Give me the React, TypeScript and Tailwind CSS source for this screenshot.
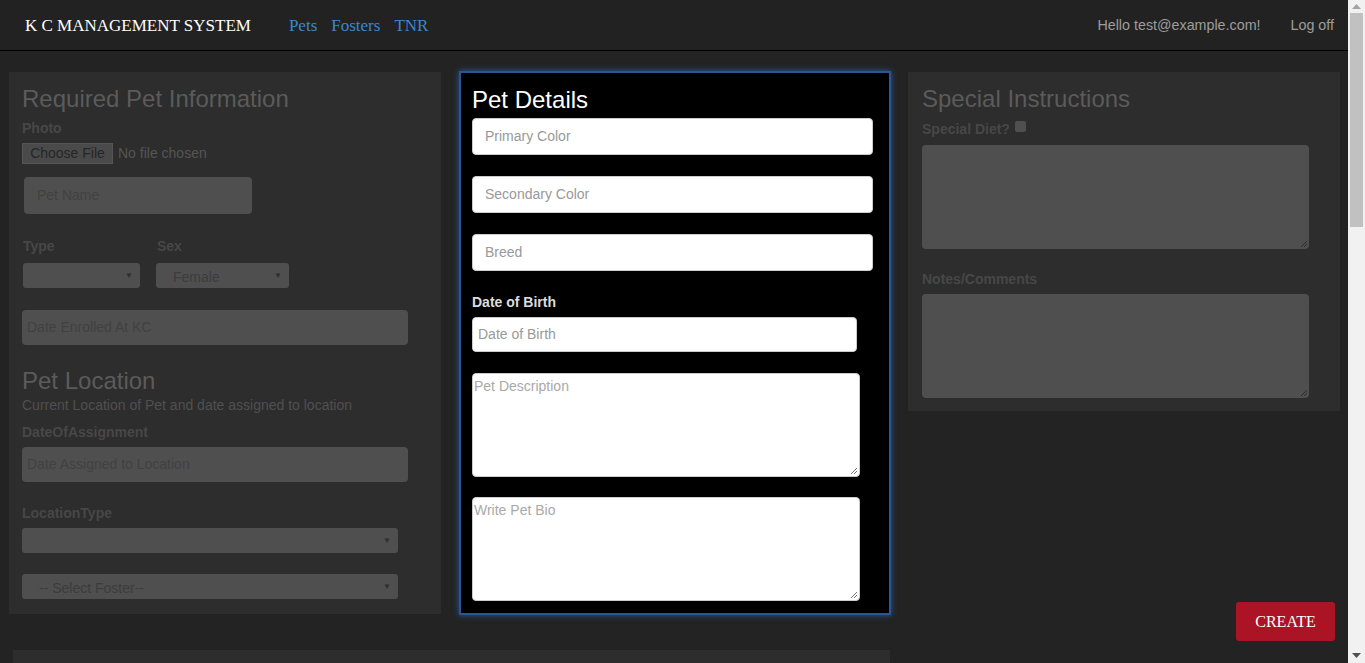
// ============================================
// PAGE: Create Pet — K C Management System
// ============================================

const sans = "font-['Liberation_Sans',Arial,sans-serif]";
const serif = "font-['Liberation_Serif','Times_New_Roman',serif]";

function Caret() {
    return <span className="text-[8px] leading-none text-[#2e2e2e]">▼</span>;
}

function Navbar() {
    return (
        <div className="h-[51px] flex-shrink-0 flex items-center bg-[#222222] border-b border-black pl-[25px] pr-[14px] pt-[2px]">
            <span className={`${serif} text-[17px] text-white`}>K C MANAGEMENT SYSTEM</span>
            <nav className={`${serif} flex items-center gap-[14px] ml-[38px] text-[17px] text-[#3d87cf]`}>
                <span>Pets</span>
                <span>Fosters</span>
                <span>TNR</span>
            </nav>
            <div className={`${sans} ml-auto flex items-center gap-[30px] text-[14.3px] text-[#9d9d9d]`}>
                <span>Hello test@example.com!</span>
                <span>Log off</span>
            </div>
        </div>
    );
}

function RequiredInfo() {
    return (
        <div className={`${sans} w-[432px] h-[542px] flex-shrink-0 bg-[#2d2d2d] px-[13px] pt-[14px] flex flex-col items-start`}>
            <h2 className="text-[24px] leading-[26px] text-[#5b5b5b]">Required Pet Information</h2>

            {/* Photo */}
            <label className="mt-[6px] text-[14px] leading-[20px] font-bold text-[#474747]">Photo</label>
            <div className="mt-[5px] flex items-center">
                <div className="h-[21px] w-[91px] flex items-center justify-center bg-[#4a4a4a] border border-[#555] text-[14px] text-[#262626]">Choose File</div>
                <span className="ml-[5px] text-[14px] text-[#555]">No file chosen</span>
            </div>

            {/* Pet name */}
            <div className="ml-[2px] mt-[13px] h-[37px] w-[228px] rounded-[4px] bg-[#4f4f4f] flex items-center px-[13px] text-[14px] text-[#414141]">Pet Name</div>

            {/* Type + Sex */}
            <div className="mt-[22px] flex gap-[16px]">
                <div className="flex flex-col">
                    <label className="ml-[1px] text-[14px] leading-[20px] font-bold text-[#474747]">Type</label>
                    <div className="mt-[7px] ml-[1px] h-[25px] w-[117px] rounded-[3px] bg-[#4f4f4f] flex items-center justify-end pr-[7px]"><Caret /></div>
                </div>
                <div className="flex flex-col">
                    <label className="ml-[1px] text-[14px] leading-[20px] font-bold text-[#474747]">Sex</label>
                    <div className="mt-[7px] h-[25px] w-[133px] rounded-[3px] bg-[#4f4f4f] flex items-center justify-between pl-[17px] pr-[7px] text-[14px] text-[#3c3c3c]">
                        <span className="pt-[4px]">Female</span>
                        <Caret />
                    </div>
                </div>
            </div>

            <div className="mt-[22px] h-[35px] w-[386px] rounded-[4px] bg-[#4f4f4f] flex items-center px-[5px] text-[14px] text-[#414141]">Date Enrolled At KC</div>

            {/* Location */}
            <h2 className="mt-[23px] text-[24px] leading-[26px] text-[#5b5b5b]">Pet Location</h2>
            <p className="mt-[1px] text-[14px] leading-[20px] text-[#505050]">Current Location of Pet and date assigned to location</p>
            <label className="mt-[7px] text-[14px] leading-[20px] font-bold text-[#474747]">DateOfAssignment</label>
            <div className="mt-[5px] h-[35px] w-[386px] rounded-[4px] bg-[#4f4f4f] flex items-center px-[5px] text-[14px] text-[#414141]">Date Assigned to Location</div>
            <label className="mt-[21px] text-[14px] leading-[20px] font-bold text-[#474747]">LocationType</label>
            <div className="mt-[5px] h-[25px] w-[376px] rounded-[3px] bg-[#4f4f4f] flex items-center justify-end pr-[7px]"><Caret /></div>
            <div className="mt-[21px] h-[25px] w-[376px] rounded-[3px] bg-[#4f4f4f] flex items-center justify-between pl-[17px] pr-[7px] text-[14px] text-[#3c3c3c]">
                <span className="pt-[4px]">-- Select Foster--</span>
                <Caret />
            </div>
        </div>
    );
}

function PetDetails() {
    const inputCls = "h-[37px] w-[401px] rounded-[4px] bg-white border border-[#ccc] flex items-center px-[12px] text-[14px] text-[#999]";
    return (
        <div className={`${sans} -mt-[1px] w-[432px] h-[544px] flex-shrink-0 bg-black border-2 border-[#2b5694] shadow-[0_0_6px_#2a5a9a] pl-[11px] pt-[14px] flex flex-col items-start`}>
            <h2 className="text-[24px] leading-[26px] text-white">Pet Details</h2>
            <div className={`mt-[5px] ${inputCls}`}>Primary Color</div>
            <div className={`mt-[21px] ${inputCls}`}>Secondary Color</div>
            <div className={`mt-[21px] ${inputCls}`}>Breed</div>
            <label className="mt-[21px] text-[14px] leading-[20px] font-bold text-[#dddddd]">Date of Birth</label>
            <div className="mt-[5px] h-[35px] w-[385px] rounded-[4px] bg-white border border-[#ccc] flex items-center px-[5px] text-[14px] text-[#999]">Date of Birth</div>
            <div className="mt-[21px] h-[104px] w-[388px] rounded-[4px] bg-white border border-[#ccc] px-[1px] pt-[2px] text-[14px] text-[#a9a9a9] relative">
                Pet Description
                <ResizeGrip />
            </div>
            <div className="mt-[20px] h-[104px] w-[388px] rounded-[4px] bg-white border border-[#ccc] px-[1px] pt-[2px] text-[14px] text-[#a9a9a9] relative">
                Write Pet Bio
                <ResizeGrip />
            </div>
        </div>
    );
}

function ResizeGrip({ dark = false }: { dark?: boolean }) {
    const c = dark ? "#2e2e2e" : "#777";
    return (
        <svg className="absolute right-[1px] bottom-[1px]" width="8" height="8" viewBox="0 0 8 8">
            <path d="M7 1 L1 7 M7 4 L4 7" stroke={c} strokeWidth="1" />
        </svg>
    );
}

function SpecialInstructions() {
    return (
        <div className={`${sans} w-[432px] h-[339px] flex-shrink-0 bg-[#2d2d2d] px-[14px] pt-[14px] flex flex-col items-start`}>
            <h2 className="text-[24px] leading-[26px] text-[#5b5b5b]">Special Instructions</h2>
            <div className="mt-[7px] flex items-start gap-[5px]">
                <label className="text-[14px] leading-[20px] font-bold text-[#474747]">Special Diet?</label>
                <span className="mt-[2px] w-[11px] h-[11px] rounded-[2px] bg-[#4f4f4f]" />
            </div>
            <div className="mt-[6px] h-[104px] w-[387px] rounded-[4px] bg-[#4f4f4f] relative"><ResizeGrip dark /></div>
            <label className="mt-[20px] text-[14px] leading-[20px] font-bold text-[#474747]">Notes/Comments</label>
            <div className="mt-[5px] h-[104px] w-[387px] rounded-[4px] bg-[#4f4f4f] relative"><ResizeGrip dark /></div>
        </div>
    );
}

function Scrollbar() {
    return (
        <div className="w-[17px] flex-shrink-0 bg-[#f1f1f1] flex flex-col items-center">
            <svg className="mt-[4px]" width="9" height="6" viewBox="0 0 9 6"><path d="M0 5 L4.5 0 L9 5 Z" fill="#a3a3a3" /></svg>
            <div className="mt-[3px] w-[13px] h-[214px] bg-[#c1c1c1]" />
            <svg className="mt-auto mb-[4px]" width="9" height="6" viewBox="0 0 9 6"><path d="M0 0 L9 0 L4.5 5 Z" fill="#505050" /></svg>
        </div>
    );
}

export default function App() {
    return (
        <div className="h-[663px] w-[1365px] overflow-hidden flex bg-[#232323]">
            <div className="flex-1 flex flex-col min-w-0">
                <Navbar />

                {/* Form columns */}
                <div className="flex items-start pl-[9px] pt-[21px] gap-[18px]">
                    <RequiredInfo />
                    <PetDetails />
                    <div className="-ml-[1px] flex flex-col items-end">
                        <SpecialInstructions />
                        <button className={`${serif} mt-[191px] mr-[5px] h-[39px] w-[99px] rounded-[3px] bg-[#ab1424] text-white text-[16px]`}>
                            CREATE
                        </button>
                    </div>
                </div>

                {/* Next section (cut off) */}
                <div className="mt-[9px] ml-[13px] w-[877px] flex-1 bg-[#2d2d2d]" />
            </div>
            <Scrollbar />
        </div>
    );
}
